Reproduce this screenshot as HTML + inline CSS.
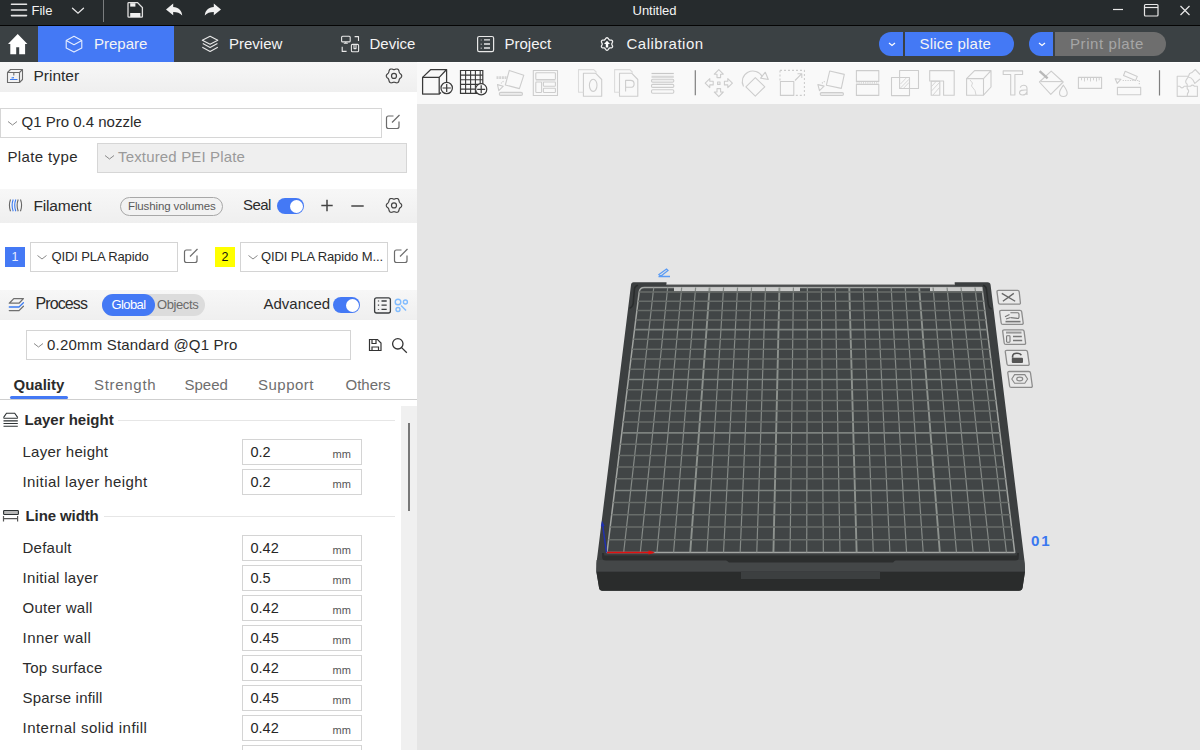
<!DOCTYPE html>
<html><head><meta charset="utf-8">
<style>
*{margin:0;padding:0;box-sizing:border-box}
html,body{width:1200px;height:750px;overflow:hidden;background:#fff;font-family:"Liberation Sans",sans-serif;color:#262626}
.a{position:absolute;white-space:nowrap}
svg{position:absolute;overflow:visible}
.tt{color:#f4f4f4;font-size:15px;line-height:18px}
.lbl{font-size:15px;line-height:18px;color:#2b2b2b}
.hl{font-size:15.5px;line-height:18px;color:#2b2b2b}
.box{position:absolute;border:1px solid #d4d4d4;background:#fff}
.unit{font-size:11px;line-height:12px;color:#555}
.val{font-size:14.5px;line-height:16px;color:#262626}
</style></head><body>
<!-- title bar -->
<div class="a" style="left:0;top:0;width:1200px;height:25px;background:#262b2d"></div>
<div class="a" style="left:0;top:25px;width:1200px;height:1px;background:#050505"></div>
<svg width="1200" height="25" style="left:0;top:0">
 <g stroke="#e6e6e6" stroke-width="1.6" fill="none" stroke-linecap="round">
  <path d="M11.5 4.2H26.5M11.5 10H26.5M11.5 15.6H26.5"/>
  <path d="M72.5 8.2L78 13.2L83.5 8.2" stroke-width="1.3"/>
 </g>
 <rect x="103" y="0" width="1" height="22" fill="#7a7d7e"/>
 <g fill="none" stroke="#e0e0e0" stroke-width="1.3">
  <path d="M128 3.2Q128 2.6 128.8 2.6H137.5L142.4 7.5V16.4Q142.4 17.2 141.6 17.2H128.8Q128 17.2 128 16.4Z"/>
 </g>
 <rect x="130.2" y="3.2" width="5.2" height="3.4" fill="#f0f0f0"/>
 <rect x="130.2" y="13" width="10.2" height="4" fill="#f0f0f0"/>
 <path d="M166 9.6L173.2 3.6V7.1C178.6 7.3 181.8 10.6 182.2 15.6C180 12.8 177.2 11.9 173.2 11.9V15.3Z" fill="#f0f0f0"/>
 <path d="M221 9.6L213.8 3.6V7.1C208.4 7.3 205.2 10.6 204.8 15.6C207 12.8 209.8 11.9 213.8 11.9V15.3Z" fill="#f0f0f0"/>
 <g stroke="#e8e8e8" stroke-width="1.2" fill="none">
  <path d="M1113 9.5H1123"/>
  <rect x="1144.5" y="4.5" width="13.5" height="11.5" rx="1"/>
  <path d="M1144.5 7.5H1158"/>
  <path d="M1180.5 6L1189.5 15M1189.5 6L1180.5 15"/>
 </g>
</svg>
<div class="a tt" style="left:31.5px;top:3px;font-size:13px;line-height:16px">File</div>
<div class="a tt" style="left:632.5px;top:3px;font-size:13px;line-height:16px">Untitled</div>

<!-- tab bar -->
<div class="a" style="left:0;top:26px;width:1200px;height:36px;background:#3b4144"></div>
<div class="a" style="left:38px;top:26px;width:136px;height:36px;background:#4479f5"></div>
<svg width="1200" height="36" style="left:0;top:0">
 <path d="M17.7 34L27.4 43.9H25.1V54.2H19.2V47.2H16.2V54.2H10.3V43.9H8Z" fill="#fff"/>
 <g fill="none" stroke="#e6eeff" stroke-width="1.1" stroke-linejoin="round">
  <path d="M74 36.3L81.8 40.6V48L74 52.1L66.2 48V40.6Z"/>
  <path d="M66.2 40.6L74 44.7L81.8 40.6"/>
 </g>
 <g fill="none" stroke="#e8e8e8" stroke-width="1.1" stroke-linejoin="round">
  <path d="M210.1 36.2L217.8 40.3L210.1 44.3L202.3 40.3Z"/>
  <path d="M202.8 43.6L210.1 47.6L217.4 43.6"/>
  <path d="M202.3 47.3L210.1 51.5L217.8 47.3"/>
  <rect x="341.6" y="36.3" width="8.6" height="5.6" rx="1"/>
  <path d="M343.8 43.2H347.8M345.8 42V43.2"/>
  <path d="M354.6 36.6H358.5V41"/>
  <path d="M342.2 46.8V51.4H346.6"/>
  <rect x="351.4" y="44.4" width="7.2" height="7.4" rx="1"/>
  <path d="M354 45V48.6H356V45"/>
  <rect x="477.6" y="36.5" width="16" height="15.2" rx="1.6" stroke-width="1.2"/>
  <path d="M481.3 39.7V40.3M481.3 43.7V44.5M481.3 47.8V48.5M484 39.9H490M484 44H490M484 48H490" stroke-width="1.4"/>
 </g>
 <g fill="none" stroke="#f0f0f0" stroke-width="1.3">
  <path d="M607.00 37.75 L607.54 37.87 L608.02 38.21 L608.42 38.69 L608.75 39.18 L609.05 39.60 L609.38 39.89 L609.78 40.03 L610.29 40.07 L610.89 40.11 L611.50 40.22 L612.04 40.47 L612.41 40.88 L612.57 41.40 L612.52 41.99 L612.31 42.58 L612.05 43.11 L611.83 43.58 L611.75 44.00 L611.83 44.42 L612.05 44.89 L612.31 45.42 L612.52 46.01 L612.57 46.60 L612.41 47.12 L612.04 47.53 L611.50 47.78 L610.89 47.89 L610.29 47.93 L609.78 47.97 L609.38 48.11 L609.05 48.40 L608.75 48.82 L608.42 49.31 L608.02 49.79 L607.54 50.13 L607.00 50.25 L606.46 50.13 L605.98 49.79 L605.58 49.31 L605.25 48.82 L604.95 48.40 L604.62 48.11 L604.22 47.97 L603.71 47.93 L603.11 47.89 L602.50 47.78 L601.96 47.53 L601.59 47.12 L601.43 46.60 L601.48 46.01 L601.69 45.42 L601.95 44.89 L602.17 44.42 L602.25 44.00 L602.17 43.58 L601.95 43.11 L601.69 42.58 L601.48 41.99 L601.43 41.40 L601.59 40.88 L601.96 40.47 L602.50 40.22 L603.11 40.11 L603.71 40.07 L604.22 40.03 L604.62 39.89 L604.95 39.60 L605.25 39.18 L605.58 38.69 L605.98 38.21 L606.46 37.87Z"/>
 </g>
 <path d="M607 40.8L610 44H608.2V47.5H605.8V44H604Z" fill="#fff"/>
</svg>
<div class="a tt" style="left:94px;top:35px">Prepare</div>
<div class="a tt" style="left:229px;top:35px">Preview</div>
<div class="a tt" style="left:369.5px;top:35px">Device</div>
<div class="a tt" style="left:504.5px;top:35px">Project</div>
<div class="a tt" style="left:626.5px;top:35px;letter-spacing:0.49px">Calibration</div>
<!-- slice/print buttons -->
<div class="a" style="left:879px;top:32px;width:26px;height:24px;background:#4479f5;border-radius:12px 0 0 12px"></div>
<div class="a" style="left:905px;top:32px;width:109px;height:24px;background:#4479f5;border-radius:0 12px 12px 0"></div>
<div class="a" style="left:903px;top:32px;width:2px;height:24px;background:#3b4144"></div>
<div class="a" style="left:1029px;top:32px;width:26px;height:24px;background:#4479f5;border-radius:12px 0 0 12px"></div>
<div class="a" style="left:1055px;top:32px;width:111px;height:24px;background:#6e6e6e;border-radius:0 12px 12px 0"></div>
<div class="a" style="left:1053px;top:32px;width:2px;height:24px;background:#3b4144"></div>
<svg width="1200" height="62" style="left:0;top:0">
 <g fill="none" stroke="#fff" stroke-width="1.2"><path d="M889 43L892 45.5L895 43"/><path d="M1039 43L1042 45.5L1045 43"/></g>
</svg>
<div class="a tt" style="left:919.5px;top:35px;letter-spacing:0.22px">Slice plate</div>
<div class="a tt" style="left:1070px;top:35px;color:#a6a6a6;letter-spacing:0.58px">Print plate</div>
<!-- left panel -->
<div class="a" style="left:0;top:62px;width:417px;height:688px;background:#fff"></div>
<div class="a" style="left:0;top:62px;width:417px;height:30px;background:linear-gradient(#f7f7f7,#efefef)"></div>
<div class="a" style="left:0;top:189px;width:417px;height:34px;background:linear-gradient(#f7f7f7,#efefef)"></div>
<div class="a" style="left:0;top:290px;width:417px;height:30px;background:linear-gradient(#f7f7f7,#efefef)"></div>
<svg width="417" height="750" style="left:0;top:0">
 <!-- printer icon -->
 <g fill="none" stroke="#6b6b6b" stroke-width="1.1" stroke-linejoin="round">
  <path d="M7.5 72.5H19.5V82.5H7.5Z"/>
  <path d="M7.5 72.5L10.5 69.5H22.5V79.5L19.5 82.5M19.5 72.5L22.5 69.5"/>
  <path d="M13.8 72.8V75.5"/>
 </g>
 <path d="M10 79.5H17.5M11.5 78L14 77.6" stroke="#3b7bf2" stroke-width="1.2" fill="none"/>
 <!-- gear icons -->
 <g fill="none" stroke="#444" stroke-width="1.2">
  <path d="M394.00 69.60 L394.42 69.56 L394.85 69.45 L395.31 69.30 L395.81 69.14 L396.34 69.02 L396.87 68.98 L397.38 69.04 L397.85 69.23 L398.25 69.54 L398.56 69.95 L398.79 70.44 L398.95 70.95 L399.06 71.46 L399.16 71.94 L399.28 72.37 L399.46 72.75 L399.70 73.09 L400.01 73.41 L400.37 73.74 L400.76 74.09 L401.13 74.48 L401.43 74.92 L401.63 75.40 L401.70 75.90 L401.63 76.40 L401.43 76.88 L401.13 77.32 L400.76 77.71 L400.37 78.06 L400.01 78.39 L399.70 78.71 L399.46 79.05 L399.28 79.43 L399.16 79.86 L399.06 80.34 L398.95 80.85 L398.79 81.36 L398.56 81.85 L398.25 82.26 L397.85 82.57 L397.38 82.76 L396.87 82.82 L396.34 82.78 L395.81 82.66 L395.31 82.50 L394.85 82.35 L394.42 82.24 L394.00 82.20 L393.58 82.24 L393.15 82.35 L392.69 82.50 L392.19 82.66 L391.66 82.78 L391.13 82.82 L390.62 82.76 L390.15 82.57 L389.75 82.26 L389.44 81.85 L389.21 81.36 L389.05 80.85 L388.94 80.34 L388.84 79.86 L388.72 79.43 L388.54 79.05 L388.30 78.71 L387.99 78.39 L387.63 78.06 L387.24 77.71 L386.87 77.32 L386.57 76.88 L386.37 76.40 L386.30 75.90 L386.37 75.40 L386.57 74.92 L386.87 74.48 L387.24 74.09 L387.63 73.74 L387.99 73.41 L388.30 73.09 L388.54 72.75 L388.72 72.37 L388.84 71.94 L388.94 71.46 L389.05 70.95 L389.21 70.44 L389.44 69.95 L389.75 69.54 L390.15 69.23 L390.62 69.04 L391.13 68.98 L391.66 69.02 L392.19 69.14 L392.69 69.30 L393.15 69.45 L393.58 69.56Z"/>
  <circle cx="394" cy="75.9" r="2.5"/>
  <path d="M394.00 199.10 L394.42 199.06 L394.85 198.95 L395.31 198.80 L395.81 198.64 L396.34 198.52 L396.87 198.48 L397.38 198.54 L397.85 198.73 L398.25 199.04 L398.56 199.45 L398.79 199.94 L398.95 200.45 L399.06 200.96 L399.16 201.44 L399.28 201.87 L399.46 202.25 L399.70 202.59 L400.01 202.91 L400.37 203.24 L400.76 203.59 L401.13 203.98 L401.43 204.42 L401.63 204.90 L401.70 205.40 L401.63 205.90 L401.43 206.38 L401.13 206.82 L400.76 207.21 L400.37 207.56 L400.01 207.89 L399.70 208.21 L399.46 208.55 L399.28 208.93 L399.16 209.36 L399.06 209.84 L398.95 210.35 L398.79 210.86 L398.56 211.35 L398.25 211.76 L397.85 212.07 L397.38 212.26 L396.87 212.32 L396.34 212.28 L395.81 212.16 L395.31 212.00 L394.85 211.85 L394.42 211.74 L394.00 211.70 L393.58 211.74 L393.15 211.85 L392.69 212.00 L392.19 212.16 L391.66 212.28 L391.13 212.32 L390.62 212.26 L390.15 212.07 L389.75 211.76 L389.44 211.35 L389.21 210.86 L389.05 210.35 L388.94 209.84 L388.84 209.36 L388.72 208.93 L388.54 208.55 L388.30 208.21 L387.99 207.89 L387.63 207.56 L387.24 207.21 L386.87 206.82 L386.57 206.38 L386.37 205.90 L386.30 205.40 L386.37 204.90 L386.57 204.42 L386.87 203.98 L387.24 203.59 L387.63 203.24 L387.99 202.91 L388.30 202.59 L388.54 202.25 L388.72 201.87 L388.84 201.44 L388.94 200.96 L389.05 200.45 L389.21 199.94 L389.44 199.45 L389.75 199.04 L390.15 198.73 L390.62 198.54 L391.13 198.48 L391.66 198.52 L392.19 198.64 L392.69 198.80 L393.15 198.95 L393.58 199.06Z"/>
  <circle cx="394" cy="205.4" r="2.5"/>
 </g>
 <!-- edit icons -->
 <g fill="none" stroke="#6b6b6b" stroke-width="1.2" stroke-linejoin="round">
  <path d="M393.5 116H388.5Q386.5 116 386.5 118V126.5Q386.5 128.5 388.5 128.5H397Q399 128.5 399 126.5V121.5"/>
  <path d="M392 122.5L399.5 115"/>
  <path d="M191.5 250H186.5Q184.5 250 184.5 252V260.5Q184.5 262.5 186.5 262.5H195Q197 262.5 197 260.5V255.5"/>
  <path d="M190 256.5L197.5 249"/>
  <path d="M401.5 250H396.5Q394.5 250 394.5 252V260.5Q394.5 262.5 396.5 262.5H405Q407 262.5 407 260.5V255.5"/>
  <path d="M400 256.5L407.5 249"/>
 </g>
 <!-- filament icon -->
 <g fill="none" stroke-width="1.1">
  <path d="M10.5 199.5Q8.3 205.3 10.5 211.2M20.5 199.5Q22.7 205.3 20.5 211.2" stroke="#666"/>
  <path d="M13.2 199.5Q11 205.3 13.2 211.2M15.8 199.5Q13.6 205.3 15.8 211.2" stroke="#3b7bf2"/>
  <path d="M18.2 199.5Q16 205.3 18.2 211.2" stroke="#666"/>
 </g>
 <!-- plus minus -->
 <path d="M327 199.8V211.2M321.3 205.5H332.7" stroke="#444" stroke-width="1.5"/>
 <path d="M351.3 206H363.7" stroke="#444" stroke-width="1.5"/>
 <!-- process icon -->
 <g fill="none" stroke-width="1.3" stroke-linejoin="round" stroke-linecap="round">
  <path d="M9.3 303.2L13.8 298.6H23.4L19 303.2Z" stroke="#707070"/>
  <path d="M9.3 307L19 307L23.4 302.8" stroke="#3b7bf2"/>
  <path d="M9.3 310.6H19L23.4 306.3" stroke="#707070"/>
 </g>
 <!-- list icon -->
 <g fill="none" stroke="#3a3d3f" stroke-width="1.3">
  <rect x="374.6" y="297.8" width="15.8" height="15.2" rx="2"/>
  <path d="M378.5 300.6V301.4M378.5 304.6V305.8M378.5 309V309.8M381.5 301H386.7M381.5 305.2H386.7M381.5 309.4H386.7"/>
 </g>
 <!-- blue icon -->
 <g fill="none" stroke="#80bcff" stroke-width="1.4">
  <circle cx="398" cy="302" r="2.8"/>
  <circle cx="405.4" cy="302" r="2"/>
  <circle cx="398" cy="309.5" r="2"/>
  <path d="M401 305.5L406 310.5"/>
 </g>
 <!-- save/search -->
 <g fill="none" stroke="#333" stroke-width="1.2">
  <path d="M369.5 339.5H377.5L381 343V350.5H369.5Z"/>
  <path d="M372 340V343.5H376V340M372 350.5V347H378.5V350.5"/>
  <circle cx="397.8" cy="343.8" r="5.2" stroke-width="1.3"/>
  <path d="M401.6 347.6L406.8 352.8" stroke-width="1.3"/>
 </g>
 <!-- layer height icon -->
 <g fill="none" stroke="#2e3335" stroke-width="1.1">
  <path d="M3.5 417.6L6.5 413.3H14.7L17.8 417.6"/>
  <path d="M3.5 418.3H17.8M3.5 420.9H17.8M3.5 423.5H17.8M3.5 426.3H17.8"/>
 </g>
 <!-- line width icon -->
 <rect x="3.6" y="510.5" width="14.8" height="4" rx="0.8" fill="#b8b8b8" stroke="#2b3032" stroke-width="1.1"/>
 <path d="M3.5 516V521.5M17.6 516V521.5M3.5 518.7H17.6" stroke="#555" stroke-width="1.2" fill="none"/>
</svg>
<div class="a hl" style="left:33.5px;top:67px">Printer</div>
<div class="box" style="left:0;top:108px;width:382px;height:30px;border-color:#d6d6d6"></div>
<div class="a lbl" style="left:21.5px;top:112.5px">Q1 Pro 0.4 nozzle</div>
<div class="a lbl" style="left:7.5px;top:148px;letter-spacing:0.37px">Plate type</div>
<div class="box" style="left:97px;top:143px;width:310px;height:30px;background:#efefef;border-color:#d6d6d6"></div>
<div class="a lbl" style="left:118px;top:147.8px;color:#9a9a9a;letter-spacing:0.16px">Textured PEI Plate</div>

<div class="a hl" style="left:33.5px;top:196.5px;letter-spacing:-0.2px">Filament</div>
<div class="a" style="left:120px;top:197px;width:103px;height:19px;border:1px solid #a8a8a8;border-radius:10px;background:#f2f2f2"></div>
<div class="a" style="left:128px;top:199px;font-size:11.5px;line-height:14px;color:#5a5a5a;letter-spacing:-0.12px">Flushing volumes</div>
<div class="a lbl" style="left:243px;top:196px;letter-spacing:-0.6px">Seal</div>
<div class="a" style="left:277px;top:198px;width:27px;height:16px;border-radius:8px;background:#4479f5"></div>
<div class="a" style="left:289.5px;top:199.5px;width:13px;height:13px;border-radius:7px;background:#fff"></div>

<div class="a" style="left:5px;top:247px;width:20px;height:20px;background:#4479f5"></div>
<div class="a" style="left:5px;top:248.5px;width:20px;text-align:center;font-size:12.5px;line-height:16px;color:#e8eeff">1</div>
<div class="box" style="left:30px;top:242px;width:148px;height:30px"></div>
<div class="a lbl" style="left:51.5px;top:248px;font-size:13px;letter-spacing:-0.12px">QIDI PLA Rapido</div>
<div class="a" style="left:215px;top:247px;width:20px;height:20px;background:#ffff00"></div>
<div class="a" style="left:215px;top:248.5px;width:20px;text-align:center;font-size:12.5px;line-height:16px;color:#111">2</div>
<div class="box" style="left:240px;top:242px;width:148px;height:30px"></div>
<div class="a lbl" style="left:261px;top:248px;font-size:13px;letter-spacing:-0.12px">QIDI PLA Rapido M...</div>

<div class="a hl" style="left:35.5px;top:295px;font-size:16px;letter-spacing:-0.9px">Process</div>
<div class="a" style="left:102px;top:294px;width:103px;height:22px;border-radius:11px;background:#dcdcdc"></div>
<div class="a" style="left:102px;top:294px;width:53px;height:22px;border-radius:11px;background:#4479f5"></div>
<div class="a" style="left:111.5px;top:297px;font-size:13px;line-height:16px;color:#fff;letter-spacing:-0.6px">Global</div>
<div class="a" style="left:157px;top:297px;font-size:13px;line-height:16px;color:#6a6a6a;letter-spacing:-0.4px">Objects</div>
<div class="a lbl" style="left:263.5px;top:294.5px">Advanced</div>
<div class="a" style="left:333px;top:297px;width:27px;height:16px;border-radius:8px;background:#4479f5"></div>
<div class="a" style="left:345.5px;top:298.5px;width:13px;height:13px;border-radius:7px;background:#fff"></div>
<div class="box" style="left:26px;top:330px;width:325px;height:30px"></div>
<div class="a lbl" style="left:47px;top:335.5px;letter-spacing:0.19px">0.20mm Standard @Q1 Pro</div>

<div class="a lbl" style="left:13.5px;top:376px;font-weight:bold">Quality</div>
<div class="a lbl" style="left:94px;top:376px;color:#6e6e6e;letter-spacing:0.7px">Strength</div>
<div class="a lbl" style="left:184.5px;top:376px;color:#6e6e6e">Speed</div>
<div class="a lbl" style="left:258px;top:376px;color:#6e6e6e;letter-spacing:0.5px">Support</div>
<div class="a lbl" style="left:345.5px;top:376px;color:#6e6e6e">Others</div>
<div class="a" style="left:10px;top:396px;width:58px;height:2.5px;border-radius:2px;background:#4479f5"></div>
<div class="a" style="left:0;top:399px;width:417px;height:1px;background:#cfcfcf"></div>

<div class="a" style="left:401px;top:406px;width:16px;height:344px;background:#f0f0f0"></div>
<div class="a" style="left:408px;top:422.5px;width:2px;height:88.5px;background:#777"></div>

<div class="a lbl" style="left:24.5px;top:411px;font-weight:bold">Layer height</div>
<div class="a" style="left:118px;top:420px;width:277px;height:1px;background:#e6e6e6"></div>
<div class="a lbl" style="left:104px;top:516px;width:291px;height:1px;background:#e6e6e6"></div>
<div class="a lbl" style="left:25.5px;top:507px;font-weight:bold;letter-spacing:-0.1px">Line width</div>
<div class="a lbl" style="left:22.5px;top:442.8px;letter-spacing:0.27px">Layer height</div>
<div class="box" style="left:242px;top:439px;width:120px;height:26px"></div>
<div class="a val" style="left:250.5px;top:443.8px">0.2</div>
<div class="a unit" style="left:332.5px;top:448px">mm</div>
<div class="a lbl" style="left:22.5px;top:472.8px;letter-spacing:0.42px">Initial layer height</div>
<div class="box" style="left:242px;top:469px;width:120px;height:26px"></div>
<div class="a val" style="left:250.5px;top:473.8px">0.2</div>
<div class="a unit" style="left:332.5px;top:478px">mm</div>
<div class="a lbl" style="left:22.5px;top:538.8px;letter-spacing:0.25px">Default</div>
<div class="box" style="left:242px;top:535px;width:120px;height:26px"></div>
<div class="a val" style="left:250.5px;top:539.8px">0.42</div>
<div class="a unit" style="left:332.5px;top:544px">mm</div>
<div class="a lbl" style="left:22.5px;top:568.8px;letter-spacing:0.31px">Initial layer</div>
<div class="box" style="left:242px;top:565px;width:120px;height:26px"></div>
<div class="a val" style="left:250.5px;top:569.8px">0.5</div>
<div class="a unit" style="left:332.5px;top:574px">mm</div>
<div class="a lbl" style="left:22.5px;top:598.8px;letter-spacing:0.26px">Outer wall</div>
<div class="box" style="left:242px;top:595px;width:120px;height:26px"></div>
<div class="a val" style="left:250.5px;top:599.8px">0.42</div>
<div class="a unit" style="left:332.5px;top:604px">mm</div>
<div class="a lbl" style="left:22.5px;top:628.8px;letter-spacing:0.47px">Inner wall</div>
<div class="box" style="left:242px;top:625px;width:120px;height:26px"></div>
<div class="a val" style="left:250.5px;top:629.8px">0.45</div>
<div class="a unit" style="left:332.5px;top:634px">mm</div>
<div class="a lbl" style="left:22.5px;top:658.8px;letter-spacing:0.22px">Top surface</div>
<div class="box" style="left:242px;top:655px;width:120px;height:26px"></div>
<div class="a val" style="left:250.5px;top:659.8px">0.42</div>
<div class="a unit" style="left:332.5px;top:664px">mm</div>
<div class="a lbl" style="left:22.5px;top:688.8px;letter-spacing:0.2px">Sparse infill</div>
<div class="box" style="left:242px;top:685px;width:120px;height:26px"></div>
<div class="a val" style="left:250.5px;top:689.8px">0.45</div>
<div class="a unit" style="left:332.5px;top:694px">mm</div>
<div class="a lbl" style="left:22.5px;top:718.8px;letter-spacing:0.47px">Internal solid infill</div>
<div class="box" style="left:242px;top:715px;width:120px;height:26px"></div>
<div class="a val" style="left:250.5px;top:719.8px">0.42</div>
<div class="a unit" style="left:332.5px;top:724px">mm</div>
<div class="box" style="left:242px;top:745px;width:120px;height:26px"></div>
<svg width="417" height="750" style="left:0;top:0">
 <!-- chevrons -->
 <g fill="none" stroke="#8a8a8a" stroke-width="1">
  <path d="M8 121.5L12.5 125L17 121.5"/>
  <path d="M105 155.5L109.5 159L114 155.5"/>
  <path d="M37.5 255.5L42 259L46.5 255.5"/>
  <path d="M248.5 255.5L253 259L257.5 255.5"/>
  <path d="M34 343.5L38.5 347L43 343.5"/>
 </g>
</svg>

<!-- viewport -->
<div class="a" style="left:417px;top:62px;width:783px;height:688px;background:#e5e5e5"></div>
<div class="a" style="left:417px;top:62px;width:783px;height:42px;background:#f9f9f9;border-top:1px solid #fff"></div>
<svg width="1200" height="750" style="left:0;top:0">
 <!-- plate body -->
 <path d="M633.5 282.2H666.5V285H954.7V282.2H987.5Q990.3 282.2 990.6 285L1024.8 563.5L1025 571.5L1022.6 587.5Q1022 590.8 1018.8 590.8H602.4Q599.6 590.8 599.1 588L596.3 571.5L596.5 563L631 285Q631.3 282.2 633.5 282.2Z" fill="#3c3f40"/>
 <path d="M596.4 571.5H1025L1022.6 587.5Q1022 590.8 1018.8 590.8H602.4Q599.6 590.8 599.1 588Z" fill="#2a2c2c"/>
 <path d="M596.6 560H1023.9L1025 571.5H596.4Z" fill="#444748"/>
 <path d="M741 571.5H880V579H741Z" fill="#3c3f40"/>
 <path d="M602 553H1019L1018.6 559Q1018 560.5 1015 560.5H606Q602.5 560.5 602.2 558Z" fill="#2c2e2e"/>
 <path d="M604 553H1017L1016.8 555.5H604.3Z" fill="#3b3e3f"/>
 <path d="M726 560H895.5L893 562.6H729Z" fill="#2c2e2e"/>
 <path d="M666.5 285H954.7" stroke="#5c5f5f" stroke-width="1.2"/>
 <path d="M607.02 552.50L1014.72 552.50L981.97 287.50L644.27 287.50Q639.77 287.50 639.17 292.00Z" fill="#414546" stroke="#a2a5a2" stroke-width="1.5" stroke-linejoin="round"/>
 <path d="M674 287.2H800V291.3H674Z" fill="#c9cac9"/>
 <path d="M930 287.2H982V291.3H930Z" fill="#c9cac9"/>
 <line x1="623.66" y1="552.50" x2="653.74" y2="287.50" stroke="#858a87" stroke-width="1.2"/>
<line x1="640.30" y1="552.50" x2="667.70" y2="287.50" stroke="#858a87" stroke-width="1.2"/>
<line x1="656.94" y1="552.50" x2="681.67" y2="287.50" stroke="#858a87" stroke-width="1.2"/>
<line x1="673.58" y1="552.50" x2="695.64" y2="287.50" stroke="#858a87" stroke-width="1.2"/>
<line x1="690.22" y1="552.50" x2="709.61" y2="287.50" stroke="#8e938f" stroke-width="1.9"/>
<line x1="706.86" y1="552.50" x2="723.57" y2="287.50" stroke="#858a87" stroke-width="1.2"/>
<line x1="723.51" y1="552.50" x2="737.54" y2="287.50" stroke="#858a87" stroke-width="1.2"/>
<line x1="740.15" y1="552.50" x2="751.51" y2="287.50" stroke="#858a87" stroke-width="1.2"/>
<line x1="756.79" y1="552.50" x2="765.48" y2="287.50" stroke="#858a87" stroke-width="1.2"/>
<line x1="773.43" y1="552.50" x2="779.44" y2="287.50" stroke="#8e938f" stroke-width="1.9"/>
<line x1="790.07" y1="552.50" x2="793.41" y2="287.50" stroke="#858a87" stroke-width="1.2"/>
<line x1="806.71" y1="552.50" x2="807.38" y2="287.50" stroke="#858a87" stroke-width="1.2"/>
<line x1="823.35" y1="552.50" x2="821.35" y2="287.50" stroke="#858a87" stroke-width="1.2"/>
<line x1="839.99" y1="552.50" x2="835.31" y2="287.50" stroke="#858a87" stroke-width="1.2"/>
<line x1="856.63" y1="552.50" x2="849.28" y2="287.50" stroke="#8e938f" stroke-width="1.9"/>
<line x1="873.27" y1="552.50" x2="863.25" y2="287.50" stroke="#858a87" stroke-width="1.2"/>
<line x1="889.91" y1="552.50" x2="877.21" y2="287.50" stroke="#858a87" stroke-width="1.2"/>
<line x1="906.55" y1="552.50" x2="891.18" y2="287.50" stroke="#858a87" stroke-width="1.2"/>
<line x1="923.20" y1="552.50" x2="905.15" y2="287.50" stroke="#858a87" stroke-width="1.2"/>
<line x1="939.84" y1="552.50" x2="919.12" y2="287.50" stroke="#8e938f" stroke-width="1.9"/>
<line x1="956.48" y1="552.50" x2="933.08" y2="287.50" stroke="#858a87" stroke-width="1.2"/>
<line x1="973.12" y1="552.50" x2="947.05" y2="287.50" stroke="#858a87" stroke-width="1.2"/>
<line x1="989.76" y1="552.50" x2="961.02" y2="287.50" stroke="#858a87" stroke-width="1.2"/>
<line x1="1006.40" y1="552.50" x2="974.99" y2="287.50" stroke="#858a87" stroke-width="1.2"/>
<line x1="608.60" y1="539.71" x2="1013.14" y2="539.71" stroke="#686d6a" stroke-width="1.5"/>
<line x1="610.16" y1="527.12" x2="1011.58" y2="527.12" stroke="#686d6a" stroke-width="1.5"/>
<line x1="611.69" y1="514.73" x2="1010.05" y2="514.73" stroke="#686d6a" stroke-width="1.5"/>
<line x1="613.20" y1="502.52" x2="1008.54" y2="502.52" stroke="#686d6a" stroke-width="1.5"/>
<line x1="614.68" y1="490.49" x2="1007.06" y2="490.49" stroke="#7d827f" stroke-width="1.7"/>
<line x1="616.15" y1="478.64" x2="1005.59" y2="478.64" stroke="#686d6a" stroke-width="1.5"/>
<line x1="617.59" y1="466.97" x2="1004.15" y2="466.97" stroke="#686d6a" stroke-width="1.5"/>
<line x1="619.01" y1="455.47" x2="1002.73" y2="455.47" stroke="#686d6a" stroke-width="1.5"/>
<line x1="620.41" y1="444.14" x2="1001.33" y2="444.14" stroke="#686d6a" stroke-width="1.5"/>
<line x1="621.79" y1="432.97" x2="999.95" y2="432.97" stroke="#7d827f" stroke-width="1.7"/>
<line x1="623.15" y1="421.96" x2="998.59" y2="421.96" stroke="#686d6a" stroke-width="1.5"/>
<line x1="624.49" y1="411.12" x2="997.25" y2="411.12" stroke="#686d6a" stroke-width="1.5"/>
<line x1="625.81" y1="400.42" x2="995.93" y2="400.42" stroke="#686d6a" stroke-width="1.5"/>
<line x1="627.12" y1="389.87" x2="994.62" y2="389.87" stroke="#686d6a" stroke-width="1.5"/>
<line x1="628.40" y1="379.48" x2="993.34" y2="379.48" stroke="#7d827f" stroke-width="1.7"/>
<line x1="629.67" y1="369.22" x2="992.07" y2="369.22" stroke="#686d6a" stroke-width="1.5"/>
<line x1="630.92" y1="359.11" x2="990.82" y2="359.11" stroke="#686d6a" stroke-width="1.5"/>
<line x1="632.15" y1="349.14" x2="989.59" y2="349.14" stroke="#686d6a" stroke-width="1.5"/>
<line x1="633.37" y1="339.30" x2="988.37" y2="339.30" stroke="#686d6a" stroke-width="1.5"/>
<line x1="634.57" y1="329.60" x2="987.17" y2="329.60" stroke="#7d827f" stroke-width="1.7"/>
<line x1="635.75" y1="320.02" x2="985.99" y2="320.02" stroke="#686d6a" stroke-width="1.5"/>
<line x1="636.92" y1="310.57" x2="984.82" y2="310.57" stroke="#686d6a" stroke-width="1.5"/>
<line x1="638.07" y1="301.25" x2="983.67" y2="301.25" stroke="#686d6a" stroke-width="1.5"/>
<line x1="639.21" y1="292.05" x2="982.53" y2="292.05" stroke="#686d6a" stroke-width="1.5"/>
 <path d="M638 285.3Q634.6 286 634.4 289.5L633.2 303.5Q632.8 306.8 629.6 308.4" fill="none" stroke="#2a2d2d" stroke-width="1.6"/>
 <path d="M983 285.3Q986.2 286 986.5 289.5L988.3 304.5Q988.8 307.5 991.6 309.2" fill="none" stroke="#2a2d2d" stroke-width="1.6"/>
 <path d="M607 552.5H653" stroke="#e01010" stroke-width="1.5"/>
 <path d="M648.5 550.5L655 552.5L648.5 554.5Z" fill="#e01010"/>
 <path d="M606.5 552.5L602.5 524" stroke="#2030b0" stroke-width="1.5"/>
 <path d="M600.8 526.5L602 520.8L604.6 526Z" fill="#2030b0"/>
 <!-- pencil -->
 <g fill="none" stroke="#5b9cf5" stroke-width="1.3"><path d="M658.5 276.5H670M659 274.5L661 276L668 270.5L666.5 269Z"/></g>
 <!-- plate side icons -->
 <g fill="#e9e9e9" stroke="#8c8c8c" stroke-width="1.3" stroke-linejoin="round">
  <path d="M998.5 290.4H1017.6Q1019 290.4 1019.2 291.8L1020.4 302.8Q1020.5 304.2 1019 304.2H1000Q998.6 304.2 998.5 302.8L997 291.8Q996.9 290.4 998.5 290.4Z"/>
  <path d="M1001.2 310.3H1020Q1021.5 310.3 1021.7 311.8L1023.2 323Q1023.3 324.4 1021.8 324.4H1002.8Q1001.4 324.4 1001.2 323L999.7 311.8Q999.6 310.3 1001.2 310.3Z"/>
  <path d="M1004.2 329.8H1022.4Q1023.9 329.8 1024.1 331.3L1025.6 343Q1025.7 344.4 1024.2 344.4H1005.8Q1004.4 344.4 1004.2 343L1002.7 331.3Q1002.6 329.8 1004.2 329.8Z"/>
  <path d="M1006.8 350.4H1025.8Q1027.3 350.4 1027.5 351.9L1029.2 364Q1029.3 365.4 1027.8 365.4H1008.6Q1007.2 365.4 1007 364L1005.3 351.9Q1005.2 350.4 1006.8 350.4Z"/>
  <path d="M1009.2 371.5H1028.8Q1030.3 371.5 1030.5 373L1032.3 386Q1032.4 387.4 1030.9 387.4H1011.2Q1009.8 387.4 1009.6 386L1007.8 373Q1007.7 371.5 1009.2 371.5Z"/>
 </g>
 <g fill="none" stroke="#666" stroke-width="1.3">
  <path d="M1001.8 293.4L1015.2 301.3M1013.8 293.4L1002.9 301.3"/>
  <path d="M1010.4 312.8H1017.6Q1019 312.8 1019 314.2V317.2Q1018.8 318.6 1017.5 318.4L1010.8 317.6M1005 316.8L1009.5 314.5M1006 319L1010.5 317.5" stroke-width="1.1" stroke="#777"/>
  <path d="M1005.5 321.6H1020.5" stroke-width="1.6" stroke="#777"/>
  <path d="M1006 332.6H1021.5" stroke-width="2" stroke="#999"/>
  <rect x="1006.6" y="335.8" width="3.4" height="6.4" rx="0.6" stroke-width="1.1" stroke="#777"/>
  <path d="M1013 336.6H1021.8M1013 340.6H1022.2" stroke-width="1.5" stroke="#777"/>
  <path d="M1012.6 357.8V356Q1013 353.2 1016.8 353.2Q1020.6 353.2 1021.2 355.2" stroke-width="1.6" stroke="#555"/>
  <path d="M1011.8 379L1014.6 374.6H1024.8L1027.6 379L1024.8 383.2H1014.6Z" stroke-width="1.1" stroke="#888"/>
  <ellipse cx="1019.7" cy="379" rx="3" ry="1.8" stroke-width="1.2" stroke="#888"/>
 </g>
 <rect x="1011.8" y="357.8" width="11.2" height="5.2" rx="1" fill="#555"/>
</svg>
<div class="a" style="left:1031px;top:532.5px;font-size:14px;line-height:16px;font-weight:bold;color:#3a78f0;letter-spacing:1.6px;transform:scaleX(1.08);transform-origin:left">01</div>
<svg width="1200" height="104" style="left:0;top:0">
 <!-- add cube -->
 <g fill="none" stroke="#3a3a3a" stroke-width="1.25" stroke-linejoin="round">
  <path d="M422.6 77.4H439.2V94H422.6Z"/>
  <path d="M422.6 77.4L430.8 69.5H446.6L439.2 77.4M446.6 69.5V82"/>
  <path d="M439.2 94L441 92.5"/>
 </g>
 <path d="M423 94.3H439" stroke="#777" stroke-width="1.3"/>
 <circle cx="446.7" cy="88" r="5.7" fill="#fafafa" stroke="#3a3a3a" stroke-width="1.2"/>
 <path d="M446.7 84V92M442.6 88H450.8" stroke="#3a3a3a" stroke-width="1.2"/>
 <!-- grid plus -->
 <g fill="none" stroke="#3a3a3a" stroke-width="1.2">
  <path d="M460.5 70.5H482.8V93.4H460.5Z"/>
  <path d="M465.6 70.5V93.4M470.6 70.5V93.4M475.4 70.5V93.4M480.2 70.5V93.4M460.5 75.1H482.8M460.5 79.8H482.8M460.5 84.4H482.8M460.5 89.1H482.8" stroke-width="1.1"/>
 </g>
 <circle cx="481.2" cy="89.3" r="5.6" fill="#fafafa" stroke="#3a3a3a" stroke-width="1.2"/>
 <path d="M481.2 85.3V93.3M477.2 89.3H485.2" stroke="#3a3a3a" stroke-width="1.2"/>
 <!-- disabled icons -->
 <g fill="none" stroke="#cdcdcd" stroke-width="1.1" stroke-linejoin="round">
  <!-- auto orient -->
  <path d="M509.3 70.4L523.8 75.2L519.4 88.6L505.3 85Z"/>
  <path d="M497.5 84.6L503.3 86.2L498.8 90.6Z"/>
  <path d="M503.5 81.2L500.5 83.8" stroke-dasharray="1.2 1"/>
  <rect x="499.3" y="92.4" width="23.2" height="3" rx="1.5" fill="#ececec"/>
  <path d="M496.5 77.6H507" stroke-width="2.6" stroke-dasharray="2 0.7" stroke="#d4d4d4"/>
  <!-- arrange -->
  <rect x="533.3" y="70.5" width="24.2" height="25"/>
  <rect x="535.8" y="72.7" width="19.6" height="6.8" rx="0.8"/>
  <rect x="535.8" y="82" width="5.8" height="10.5" rx="0.8"/>
  <rect x="543.4" y="82" width="12" height="4.2" rx="0.8"/>
  <rect x="543.4" y="88.3" width="12" height="4.2" rx="0.8"/>
  <path d="M535.8 80.7H555.4" stroke="#e2e2e2" stroke-width="1.6"/>
  <!-- copies 0 -->
  <path d="M583.4 73.2H595.5L601.7 79.5V96.2H583.4Z"/>
  <path d="M583.4 92.3H578.5V69.6H593.8L596.6 72.5" stroke="#dcdcdc"/>
  <ellipse cx="593.2" cy="85.3" rx="3.8" ry="6.1"/>
  <!-- copies P -->
  <path d="M619.5 73.2H631.6L637.8 79.5V96.2H619.5Z"/>
  <path d="M619.5 92.3H614.6V69.6H629.9L632.7 72.5" stroke="#dcdcdc"/>
  <path d="M625.6 91.6V80.4H630.5Q634.1 80.4 634.1 83.9Q634.1 87.3 630.5 87.3H625.6"/>
  <!-- layers -->
  <path d="M651.5 73.5H673.8" stroke="#c8c8c8" stroke-width="1.2"/>
  <path d="M651.5 76.8H673.8" stroke="#d8d8d8" stroke-width="2.2"/>
  <rect x="651.5" y="79.2" width="22.3" height="3" rx="1.2" fill="#eeeeee"/>
  <rect x="651.5" y="84.4" width="22.3" height="3" rx="1.2"/>
  <rect x="651.5" y="89.8" width="22.3" height="3.5" rx="1.2"/>
  <!-- move -->
  <path d="M718.8 69.6L723.3 74.2H720.6V77.6H717V74.2H714.3Z"/>
  <path d="M718.8 96.6L723.3 92H720.6V88.6H717V92H714.3Z"/>
  <path d="M705.2 83.1L709.8 78.6V81.3H713.2V84.9H709.8V87.6Z"/>
  <path d="M732.4 83.1L727.8 78.6V81.3H724.4V84.9H727.8V87.6Z"/>
  <rect x="717.6" y="82" width="2.4" height="2.4"/>
  <!-- rotate -->
  <path d="M755.3 77.6L764.8 86.8L755.3 96.2L745.9 86.8Z"/>
  <path d="M743.5 86.5A10.4 10.4 0 0 1 762.2 76.6"/>
  <path d="M760.6 78.1L768.3 79.5L765.3 72.2Z"/>
  <!-- scale -->
  <path d="M780 70.4H804.4V95.4H794" stroke-dasharray="2 2"/>
  <path d="M780 70.4V81.2" stroke-dasharray="2 2"/>
  <path d="M780.4 81.5H793.8V95.4H780.4Z"/>
  <path d="M795 80.5L801.8 73.7M797.5 73.7H801.8V78"/>
  <!-- lay on face -->
  <path d="M829.7 71L844.3 74.4L841.3 88.4L826.4 85.2Z"/>
  <path d="M817.9 84.6L824.1 86.1L819.5 90.6Z"/>
  <path d="M824.8 81.4L821 83.8" stroke-dasharray="1.2 1"/>
  <rect x="820.2" y="92.6" width="23.3" height="2.9" rx="1.4" fill="#ececec"/>
  <!-- cut -->
  <rect x="856.4" y="70.6" width="22.4" height="10.8"/>
  <rect x="856.4" y="84.4" width="22.4" height="11"/>
  <path d="M856.4 82.9H878.8" stroke-dasharray="1 1.2"/>
  <!-- boolean -->
  <rect x="899.6" y="70.5" width="18.9" height="18"/>
  <rect x="891.5" y="77.5" width="18" height="18.1"/>
  <path d="M900.5 84L906 78.2M900.5 88L909 79.3M903.5 88.3L909 82.5" stroke-width="0.8"/>
  <!-- support -->
  <path d="M929.7 70.6H954.2V95.2H943.6V81H929.7Z"/>
  <rect x="931.2" y="81.2" width="8.6" height="14" />
  <path d="M931.5 86.5L936 81.5M931.5 91L939.5 82.5M933 95L939.5 87.5" stroke-width="0.8"/>
  <!-- cube crack -->
  <path d="M966.6 78.6H983.5V95.2H966.6Z"/>
  <path d="M966.6 78.6L974.6 70.6H991V87L983.5 95.2M983.5 78.6L991 70.6"/>
  <path d="M970 80L972.5 83L971.5 86L975 90.5L976 95" stroke-width="0.8"/>
  <!-- text -->
  <path d="M1003.2 70.9H1022.6V74.5H1014.9V95H1010.7V74.5H1003.2Z"/>
  <path d="M1020.2 87.5Q1021 85.3 1023.5 85.3Q1027 85.3 1027 88.3V95M1027 90Q1019.5 89.5 1019.5 92.5Q1019.5 95 1022.5 95Q1026 95 1027 92"/>
  <!-- paint -->
  <path d="M1051.2 71.2L1063.2 82L1050.8 94.4L1039.4 82Z"/>
  <path d="M1041 81.6H1062" />
  <path d="M1063.4 85.2Q1067.2 90.5 1067.2 93Q1067.2 96.5 1063.4 96.5Q1059.5 96.5 1059.5 93Q1059.5 90.5 1063.4 85.2Z"/>
  <!-- ruler -->
  <rect x="1078.4" y="77.4" width="23.2" height="11"/>
  <path d="M1081.5 77.4V80.3M1084.5 77.4V81.5M1087.5 77.4V80.3M1090.5 77.4V81.5M1093.5 77.4V80.3M1096.5 77.4V81.5M1099.2 77.4V80.3" stroke-width="0.9"/>
  <!-- cut lay -->
  <rect x="1117.4" y="87.4" width="23.3" height="7.3"/>
  <path d="M1125.2 71.3L1137.3 76.4L1135.6 80.6L1123.5 75.5Z"/>
  <path d="M1115.2 78.8L1121 79.2L1117.2 83.3Z"/>
  <path d="M1122.7 80.5H1139.3V85.5" stroke-dasharray="1.2 1.2"/>
  <!-- puzzle -->
  <g stroke="#d0d0d0" stroke-width="1.1">
  <path d="M1188 76.2H1177.2V96.4H1197.4V86.3H1194.5Q1192.5 84 1190.5 86.3H1187.2"/>
  <path d="M1177.2 86.3H1179.8Q1182 89.5 1184.2 86.3H1187.2"/>
  <path d="M1187.2 86.3V88.8Q1190 91 1187.5 93.5L1187.2 96.4"/>
  <path d="M1187.2 86.3V84.2Q1184.6 82.2 1186.4 79.6L1188.2 77"/>
  <path d="M1188.2 77L1189.6 73.5Q1192.5 72.8 1193.6 71L1195.3 69.5L1200 74.5M1188.2 77.3Q1191.2 77.3 1193 80L1194.8 83.4L1200 79"/>
  </g>
 </g>
 <path d="M1039.6 71.1L1047.6 78.4" stroke="#b8b8b8" stroke-width="2.4"/>
 <path d="M695.3 70.3V95.3M1159.5 70.3V95.5" stroke="#7f7f7f" stroke-width="1.2"/>
</svg>
</body></html>
